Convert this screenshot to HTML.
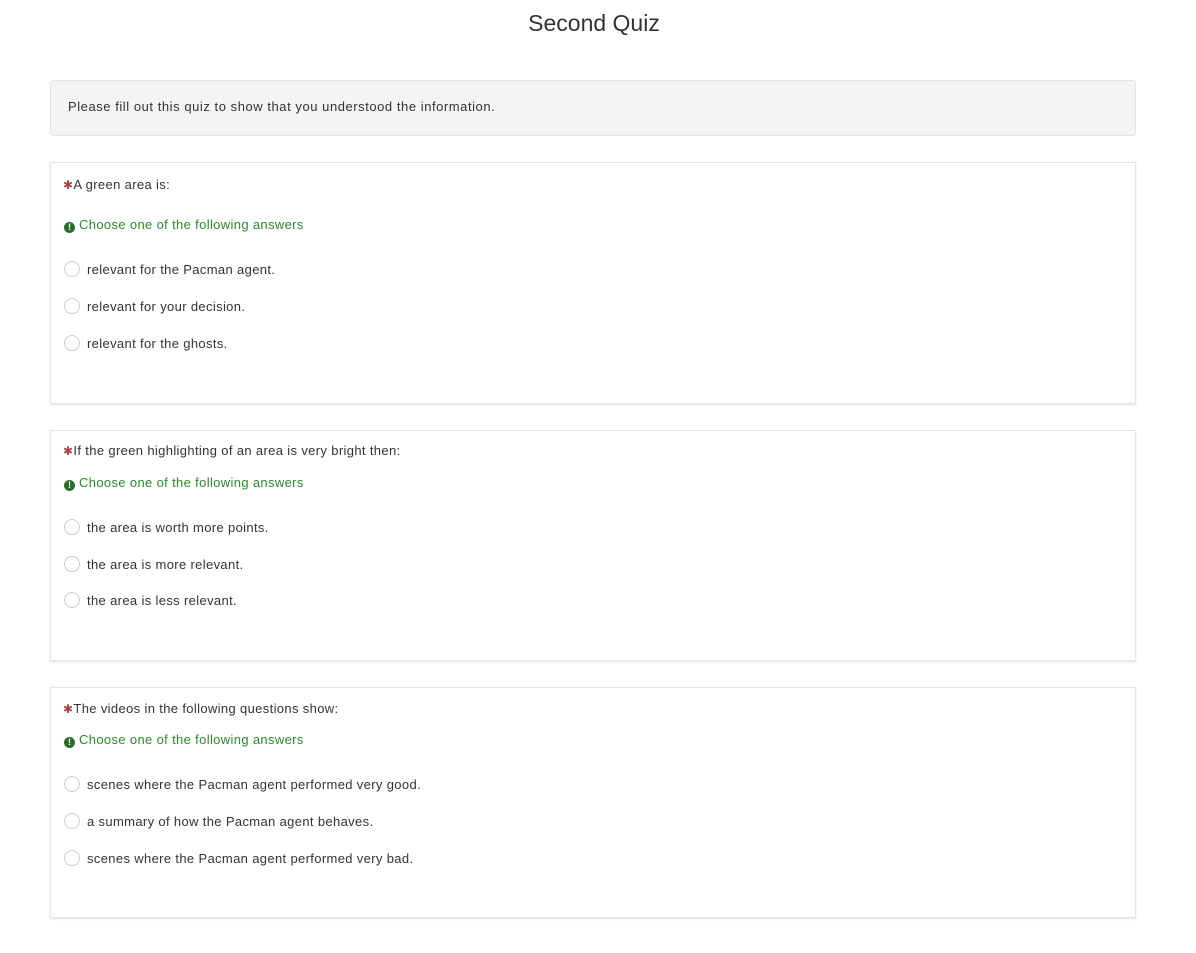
<!DOCTYPE html>
<html><head><style>
body{margin:0;background:#fff;font-family:"Liberation Sans",sans-serif;color:#333;width:1196px;height:953px;position:relative;overflow:hidden}
.a{position:absolute;white-space:nowrap;font-size:13px;line-height:16px;letter-spacing:0.35px}
h1{position:absolute;top:10px;left:-4px;width:1196px;text-align:center;font-weight:normal;font-size:23px;margin:0;color:#333}
.well{position:absolute;left:50px;top:80px;width:1084px;height:54px;background:#f4f4f4;border:1px solid #e3e3e3;border-radius:3px}
.panel{position:absolute;left:50px;width:1084px;background:#fff;border:1px solid #e6e6e6;box-shadow:0 1px 2px rgba(0,0,0,.12)}
.req{color:#a94442;font-size:12px}
.hint{color:#2b8a2b}
.ic{display:inline-block;width:11px;height:11px;border-radius:50%;background:#2b6e2b;color:#fff;font-size:9px;line-height:11px;text-align:center;font-weight:bold;vertical-align:-1px;margin-right:4px;letter-spacing:0}
.r{position:absolute;width:14px;height:14px;border:1px solid #ccc;border-radius:50%;background:#fff}
</style></head><body>
<h1>Second Quiz</h1>
<div class="well"></div>
<div class="a" style="left:68px;top:99px;letter-spacing:0.55px">Please fill out this quiz to show that you understood the information.</div>

<div class="panel" style="top:162px;height:240px"></div>
<div class="panel" style="top:430px;height:229px"></div>
<div class="panel" style="top:687px;height:229px"></div>

<div class="a" style="left:63px;top:177px"><span class="req">✱</span>A green area is:</div>
<div class="a hint" style="left:64px;top:217px"><span class="ic">!</span>Choose one of the following answers</div>
<div class="r" style="left:64px;top:261px"></div><div class="a" style="left:87px;top:262px">relevant for the Pacman agent.</div>
<div class="r" style="left:64px;top:298px"></div><div class="a" style="left:87px;top:299px">relevant for your decision.</div>
<div class="r" style="left:64px;top:335px"></div><div class="a" style="left:87px;top:336px">relevant for the ghosts.</div>

<div class="a" style="left:63px;top:443px"><span class="req">✱</span>If the green highlighting of an area is very bright then:</div>
<div class="a hint" style="left:64px;top:475px"><span class="ic">!</span>Choose one of the following answers</div>
<div class="r" style="left:64px;top:519px"></div><div class="a" style="left:87px;top:520px">the area is worth more points.</div>
<div class="r" style="left:64px;top:556px"></div><div class="a" style="left:87px;top:557px">the area is more relevant.</div>
<div class="r" style="left:64px;top:592px"></div><div class="a" style="left:87px;top:593px">the area is less relevant.</div>

<div class="a" style="left:63px;top:701px"><span class="req">✱</span>The videos in the following questions show:</div>
<div class="a hint" style="left:64px;top:732px"><span class="ic">!</span>Choose one of the following answers</div>
<div class="r" style="left:64px;top:776px"></div><div class="a" style="left:87px;top:777px">scenes where the Pacman agent performed very good.</div>
<div class="r" style="left:64px;top:813px"></div><div class="a" style="left:87px;top:814px">a summary of how the Pacman agent behaves.</div>
<div class="r" style="left:64px;top:850px"></div><div class="a" style="left:87px;top:851px">scenes where the Pacman agent performed very bad.</div>
</body></html>
